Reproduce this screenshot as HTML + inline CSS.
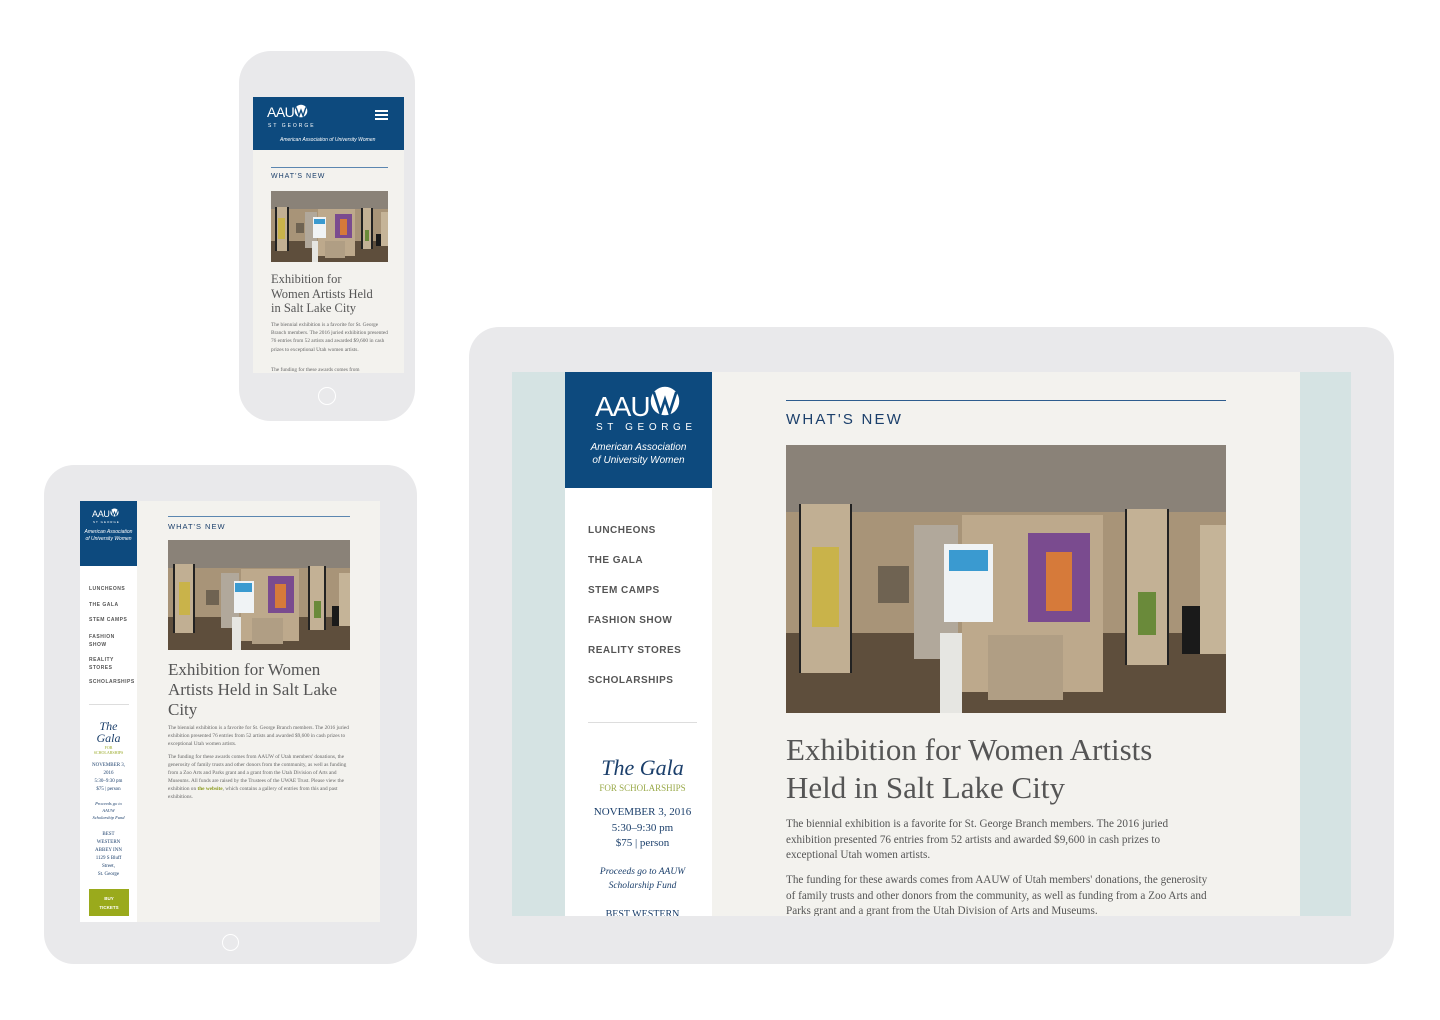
<!DOCTYPE html>
<html><head><meta charset="utf-8">
<style>
*{margin:0;padding:0;box-sizing:border-box}
body{width:1440px;height:1020px;background:#fff;position:relative;overflow:hidden;font-family:"Liberation Sans",sans-serif}
.a{position:absolute}
.frame{position:absolute;background:#e9e9eb}
.blue{background:#0d4a7e}
.serif{font-family:"Liberation Serif",serif}
.img{position:absolute;overflow:hidden;background:#b3a083}
.img div{position:absolute}
.nav{position:absolute;font-weight:bold;color:#555;letter-spacing:.5px}
.logo{position:absolute;color:#fff;text-align:center}
</style></head><body>

<!-- PHONE -->
<div class="frame" style="left:239px;top:51px;width:176px;height:370px;border-radius:32px"></div>
<div class="a" style="left:253px;top:97px;width:151px;height:276px;background:#f3f2ee"></div>
<div class="a blue" style="left:253px;top:97px;width:151px;height:53px"></div>
<div class="a" style="left:267px;top:104px;color:#fff;font-size:14px;letter-spacing:-.5px">AAU<svg width="14" height="14" viewBox="0 0 20 20" style="vertical-align:-1px"><circle cx="10" cy="10" r="9" fill="#fff"/><path d="M3 5 L7 17 L10 9 L13 17 L17 5" stroke="#0d4a7e" stroke-width="2" fill="none"/></svg></div>
<div class="a" style="left:268px;top:123px;color:#fff;font-size:5px;letter-spacing:2px">ST GEORGE</div>
<div class="a" style="left:280px;top:137px;color:#fff;font-size:5px;font-style:italic">American Association of University Women</div>
<div class="a" style="left:375px;top:110px;width:13px;height:2px;background:#fff;box-shadow:0 4px 0 #fff,0 8px 0 #fff"></div>
<div class="a" style="left:271px;top:167px;width:117px;height:1px;background:#5b86b0"></div>
<div class="a" style="left:271px;top:173px;font-size:7px;letter-spacing:1px;color:#1b3f6b">WHAT'S NEW</div>
<div class="img" id="i1" style="left:271px;top:191px;width:117px;height:71px"></div>
<div class="a serif" style="left:271px;top:272px;width:130px;font-size:12.5px;line-height:14.5px;color:#555;white-space:nowrap">Exhibition for<br>Women Artists Held<br>in Salt Lake City</div>
<div class="a serif" style="left:271px;top:321px;width:118px;font-size:5.3px;line-height:8.2px;color:#666">The biennial exhibition is a favorite for St. George Branch members. The 2016 juried exhibition presented 76 entries from 52 artists and awarded $9,600 in cash prizes to exceptional Utah women artists.</div>
<div class="a serif" style="left:271px;top:367px;font-size:5.3px;color:#666">The funding for these awards comes from</div>
<div class="a" style="left:318px;top:387px;width:18px;height:18px;border:1px solid #fff;border-radius:50%"></div>

<!-- SMALL TABLET -->
<div class="frame" style="left:44px;top:465px;width:373px;height:499px;border-radius:30px"></div>
<div class="a" style="left:80px;top:501px;width:300px;height:421px;background:#f3f2ee"></div>
<div class="a" style="left:80px;top:501px;width:57px;height:421px;background:#fff"></div>
<div class="a blue" style="left:80px;top:501px;width:57px;height:65px"></div>
<div class="a" style="left:92px;top:508px;color:#fff;font-size:9px;letter-spacing:-.3px">AAU<svg width="9" height="9" viewBox="0 0 20 20"><circle cx="10" cy="10" r="9" fill="#fff"/><path d="M3 5 L7 17 L10 9 L13 17 L17 5" stroke="#0d4a7e" stroke-width="2" fill="none"/></svg></div>
<div class="a" style="left:93px;top:520px;color:#fff;font-size:3px;letter-spacing:1px">ST GEORGE</div>
<div class="logo" style="left:82px;top:529px;width:53px;font-size:5px;line-height:7px;font-style:italic">American Association of University Women</div>
<div class="nav" style="left:89px;top:586px;font-size:5px">LUNCHEONS</div>
<div class="nav" style="left:89px;top:602px;font-size:5px">THE GALA</div>
<div class="nav" style="left:89px;top:617px;font-size:5px">STEM CAMPS</div>
<div class="nav" style="left:89px;top:633px;font-size:5px;line-height:8px">FASHION<br>SHOW</div>
<div class="nav" style="left:89px;top:656px;font-size:5px;line-height:8px">REALITY<br>STORES</div>
<div class="nav" style="left:89px;top:679px;font-size:5px">SCHOLARSHIPS</div>
<div class="a" style="left:89px;top:704px;width:40px;height:1px;background:#ddd"></div>
<div class="a serif" style="left:80px;top:720px;width:57px;text-align:center;font-size:12px;line-height:12px;font-style:italic;color:#1b3f6b">The<br>Gala</div>
<div class="a serif" style="left:80px;top:745px;width:57px;text-align:center;font-size:4px;color:#9aaa2a">FOR<br>SCHOLARSHIPS</div>
<div class="a serif" style="left:80px;top:762px;width:57px;text-align:center;font-size:5px;line-height:8px;color:#1b3f6b">NOVEMBER 3,<br>2016<br>5:30–9:30 pm<br>$75 | person</div>
<div class="a serif" style="left:80px;top:800px;width:57px;text-align:center;font-size:4.5px;line-height:7px;font-style:italic;color:#1b3f6b">Proceeds go to<br>AAUW<br>Scholarship Fund</div>
<div class="a serif" style="left:80px;top:831px;width:57px;text-align:center;font-size:5px;line-height:8px;color:#1b3f6b">BEST<br>WESTERN<br>ABBEY INN<br>1129 S Bluff<br>Street,<br>St. George</div>
<div class="a" style="left:89px;top:889px;width:40px;height:27px;background:#9aaa1c;color:#fff;font-size:4.5px;font-weight:bold;text-align:center;line-height:9px;padding-top:5px">BUY<br>TICKETS</div>
<div class="a" style="left:168px;top:516px;width:182px;height:1px;background:#5b86b0"></div>
<div class="a" style="left:168px;top:522px;font-size:7.5px;letter-spacing:1px;color:#1b3f6b">WHAT'S NEW</div>
<div class="img" id="i2" style="left:168px;top:540px;width:182px;height:110px"></div>
<div class="a serif" style="left:168px;top:660px;width:190px;font-size:17px;line-height:20px;color:#555">Exhibition for Women Artists Held in Salt Lake City</div>
<div class="a serif" style="left:168px;top:724px;width:183px;font-size:5.3px;line-height:8px;color:#666">The biennial exhibition is a favorite for St. George Branch members. The 2016 juried exhibition presented 76 entries from 52 artists and awarded $9,600 in cash prizes to exceptional Utah women artists.</div>
<div class="a serif" style="left:168px;top:753px;width:183px;font-size:5.3px;line-height:8px;color:#666">The funding for these awards comes from AAUW of Utah members' donations, the generosity of family trusts and other donors from the community, as well as funding from a Zoo Arts and Parks grant and a grant from the Utah Division of Arts and Museums. All funds are raised by the Trustees of the UWAE Trust. Please view the exhibition on <b style="color:#8a9a1c">the website</b>, which contains a gallery of entries from this and past exhibitions.</div>
<div class="a" style="left:222px;top:934px;width:17px;height:17px;border:1px solid #fff;border-radius:50%"></div>

<!-- LARGE TABLET -->
<div class="frame" style="left:469px;top:327px;width:925px;height:637px;border-radius:30px"></div>
<div class="a" style="left:512px;top:372px;width:839px;height:544px;background:#d5e3e3"></div>
<div class="a" style="left:712px;top:372px;width:588px;height:544px;background:#f3f2ee"></div>
<div class="a" style="left:565px;top:372px;width:147px;height:544px;background:#fff"></div>
<div class="a blue" style="left:565px;top:372px;width:147px;height:116px"></div>
<div class="a" style="left:595px;top:386px;color:#fff;font-size:28px;letter-spacing:-1px;line-height:34px">AAU<svg width="30" height="30" viewBox="0 0 20 20" style="vertical-align:0px"><circle cx="10" cy="10" r="9.5" fill="#fff"/><path d="M2.5 4 L7 18 L10 9 L13 18 L17.5 4" stroke="#0d4a7e" stroke-width="1.8" fill="none"/></svg></div>
<div class="a" style="left:596px;top:422px;color:#fff;font-size:10px;letter-spacing:4.6px">ST GEORGE</div>
<div class="logo" style="left:565px;top:441px;width:147px;font-size:10px;line-height:13px;font-style:italic">American Association<br>of University Women</div>
<div class="nav" style="left:588px;top:525px;font-size:10px">LUNCHEONS</div>
<div class="nav" style="left:588px;top:555px;font-size:10px">THE GALA</div>
<div class="nav" style="left:588px;top:585px;font-size:10px">STEM CAMPS</div>
<div class="nav" style="left:588px;top:615px;font-size:10px">FASHION SHOW</div>
<div class="nav" style="left:588px;top:645px;font-size:10px">REALITY STORES</div>
<div class="nav" style="left:588px;top:675px;font-size:10px">SCHOLARSHIPS</div>
<div class="a" style="left:588px;top:722px;width:109px;height:1px;background:#ddd"></div>
<div class="a serif" style="left:565px;top:755px;width:155px;text-align:center;font-size:22px;font-style:italic;color:#1b3f6b">The Gala</div>
<div class="a serif" style="left:565px;top:783px;width:155px;text-align:center;font-size:9px;color:#9aaa4a">FOR SCHOLARSHIPS</div>
<div class="a serif" style="left:565px;top:805px;width:155px;text-align:center;font-size:11px;line-height:15.5px;color:#1b3f6b">NOVEMBER 3, 2016<br>5:30–9:30 pm<br>$75 | person</div>
<div class="a serif" style="left:565px;top:865px;width:155px;text-align:center;font-size:9.5px;line-height:14px;font-style:italic;color:#1b3f6b">Proceeds go to AAUW<br>Scholarship Fund</div>
<div class="a" style="left:565px;top:904px;width:155px;height:12px;overflow:hidden"><div class="serif" style="text-align:center;font-size:10px;color:#1b3f6b;padding-top:5px">BEST WESTERN</div></div>
<div class="a" style="left:786px;top:400px;width:440px;height:1px;background:#2d5c8e"></div>
<div class="a" style="left:786px;top:411px;font-size:15px;letter-spacing:2.2px;color:#1b3f6b">WHAT'S NEW</div>
<div class="img" id="i3" style="left:786px;top:445px;width:440px;height:268px"></div>
<div class="a serif" style="left:786px;top:731px;width:440px;font-size:31px;line-height:38px;color:#555;white-space:nowrap">Exhibition for Women Artists<br>Held in Salt Lake City</div>
<div class="a serif" style="left:786px;top:817px;width:420px;font-size:11.2px;line-height:15.5px;color:#555">The biennial exhibition is a favorite for St. George Branch members. The 2016 juried exhibition presented 76 entries from 52 artists and awarded $9,600 in cash prizes to exceptional Utah women artists.</div>
<div class="a" style="left:786px;top:873px;width:425px;height:43px;overflow:hidden"><div class="serif" style="font-size:11.2px;line-height:15.5px;color:#555">The funding for these awards comes from AAUW of Utah members' donations, the generosity of family trusts and other donors from the community, as well as funding from a Zoo Arts and Parks grant and a grant from the Utah Division of Arts and Museums.</div></div>

<template id="g">
<div style="left:0;top:0;width:100%;height:30%;background:#8a8278"></div>
<div style="left:0;top:25%;width:100%;height:50%;background:#a89478"></div>
<div style="left:0;top:70%;width:100%;height:30%;background:#5e4e3c"></div>
<div style="left:3%;top:22%;width:12%;height:63%;background:#c1af93;border-left:2px solid #222;border-right:2px solid #222"></div>
<div style="left:6%;top:38%;width:6%;height:30%;background:#c9b34a"></div>
<div style="left:21%;top:45%;width:7%;height:14%;background:#6f6352"></div>
<div style="left:29%;top:30%;width:10%;height:50%;background:#b1a89b"></div>
<div style="left:40%;top:26%;width:32%;height:66%;background:#bda98c"></div>
<div style="left:55%;top:33%;width:14%;height:33%;background:#7a4b8f"></div>
<div style="left:59%;top:40%;width:6%;height:22%;background:#d67a3a"></div>
<div style="left:36%;top:37%;width:11%;height:29%;background:#f0f3f5"></div>
<div style="left:37%;top:39%;width:9%;height:8%;background:#3a9ad0"></div>
<div style="left:35%;top:70%;width:5%;height:30%;background:#e6e6e2"></div>
<div style="left:46%;top:71%;width:17%;height:24%;background:#b09e84"></div>
<div style="left:77%;top:24%;width:10%;height:58%;background:#c3b195;border-left:2px solid #222;border-right:2px solid #222"></div>
<div style="left:80%;top:55%;width:4%;height:16%;background:#6a8a3a"></div>
<div style="left:90%;top:60%;width:4%;height:18%;background:#1a1a1a"></div>
<div style="left:94%;top:30%;width:6%;height:48%;background:#c5b498"></div>
</template>
<script>
['i1','i2','i3'].forEach(function(id){document.getElementById(id).innerHTML=document.getElementById('g').innerHTML;});
</script>
</body></html>
